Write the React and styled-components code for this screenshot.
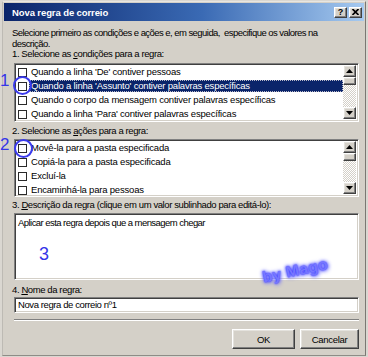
import React from "react";
import styled, { createGlobalStyle, css } from "styled-components";

const GlobalStyle = createGlobalStyle`
  body {
    margin: 0;
    background: #dad7d1;
  }
  * {
    box-sizing: border-box;
  }
`;

const raised = css`
  border: 1px solid;
  border-color: #ffffff #404040 #404040 #ffffff;
  box-shadow: inset -1px -1px #808080, inset 1px 1px #e4e2dd;
  background: #d4d0c8;
`;

const sunken = css`
  border: 1px solid;
  border-color: #808080 #ffffff #ffffff #808080;
  box-shadow: inset 1px 1px #404040, inset -1px -1px #d4d0c8;
  background: #ffffff;
`;

const Page = styled.div`
  position: relative;
  width: 368px;
  height: 357px;
  padding: 1px 2px 0 2px;
  overflow: hidden;
  font-family: "Liberation Sans", Arial, sans-serif;
  font-size: 9.5px;
  letter-spacing: -0.4px;
  color: #000;
`;

const Window = styled.div`
  height: 355px;
  background: #d4d0c8;
  border: 1px solid;
  border-color: #e8e6e1 #7a7873 #8e8c87 #bdbab4;
  display: flex;
  flex-direction: column;
`;

const TitleBar = styled.div`
  height: 18px;
  margin: 1px;
  padding: 0 2px 0 8px;
  display: flex;
  align-items: center;
  background: linear-gradient(to right, #0a246a 0%, #3a6ab4 55%, #a6caf0 100%);
`;

const Title = styled.span`
  flex: 1;
  color: #fff;
  font-weight: bold;
  font-size: 9.5px;
  letter-spacing: -0.1px;
`;

const CaptionButton = styled.div`
  ${raised};
  width: 13px;
  height: 11px;
  margin-left: 2px;
  display: flex;
  align-items: center;
  justify-content: center;
  font-weight: bold;
  font-size: 9px;
  letter-spacing: 0;
  line-height: 1;
`;

const Body = styled.div`
  position: relative;
  flex: 1;
  padding: 5px 6px 0 9px;
  display: flex;
  flex-direction: column;
`;

const Intro = styled.div`
  line-height: 11px;
  white-space: nowrap;
  letter-spacing: -0.55px;
`;

const Label = styled.div`
  line-height: 10px;
  margin-top: ${(p) => p.$top || 0}px;
`;

const Underline = styled.span`
  text-decoration: underline;
`;

const ListBox = styled.div`
  ${sunken};
  margin: ${(p) => p.$top || 4}px 0 0 2px;
  height: ${(p) => p.$height}px;
  padding: 1px 2px 2px 2px;
  display: flex;
`;

const Rows = styled.div`
  flex: 1;
`;

const Row = styled.div`
  height: 14px;
  display: flex;
  align-items: center;
  padding-left: 1px;
`;

const CheckBox = styled.span`
  width: 9px;
  height: 9px;
  border: 1px solid #2a2a2a;
  background: #fff;
  flex-shrink: 0;
`;

const RowText = styled.span`
  margin-left: 2px;
  padding: 0 2px;
  line-height: 12px;
  white-space: nowrap;
  letter-spacing: -0.2px;
  ${(p) =>
    p.$selected &&
    css`
      flex: 1;
      background: #0a246a;
      color: #fff;
      outline: 1px dotted #b8b8c8;
      outline-offset: -1px;
    `}
`;

const ScrollBar = styled.div`
  width: 13px;
  display: flex;
  flex-direction: column;
  background-color: #eeede9;
  background-image: repeating-conic-gradient(#d4d0c8 0 25%, #ffffff 0 50%);
  background-size: 2px 2px;
`;

const ScrollButton = styled.div`
  ${raised};
  height: 12px;
  display: flex;
  align-items: center;
  justify-content: center;
`;

const Thumb = styled.div`
  ${raised};
  height: 8px;
`;

const Track = styled.div`
  flex: 1;
`;

const DescBox = styled.div`
  ${sunken};
  position: relative;
  margin: 3px 0 0 2px;
  height: 67px;
  padding: 3px 3px;
  line-height: 11px;
  letter-spacing: -0.55px;
`;

const NameInput = styled.div`
  ${sunken};
  margin: 2px 0 0 2px;
  height: 16px;
  padding: 0 3px;
  line-height: 14px;
`;

const Separator = styled.div`
  margin: 6px 0 0 2px;
  height: 2px;
  border-top: 1px solid #808080;
  border-bottom: 1px solid #ffffff;
`;

const ButtonRow = styled.div`
  display: flex;
  justify-content: flex-end;
  gap: 5px;
  margin-top: 8px;
`;

const PushButton = styled.div`
  ${raised};
  width: ${(p) => p.$width}px;
  height: 20px;
  display: flex;
  align-items: center;
  justify-content: center;
  letter-spacing: -0.3px;
`;

/* hand drawn annotations lying over the dialog */
const Marker = styled.span`
  position: absolute;
  left: ${(p) => p.$x}px;
  top: ${(p) => p.$y}px;
  color: #3535e8;
  font-family: "Liberation Sans", Arial, sans-serif;
  font-size: ${(p) => p.$size || 17}px;
  letter-spacing: 0;
  line-height: 1;
`;

const Ring = styled.span`
  position: absolute;
  left: ${(p) => p.$x}px;
  top: ${(p) => p.$y}px;
  width: 19px;
  height: 19px;
  border: 2px solid #3a3aec;
  border-radius: 50%;
`;

const Signature = styled.span`
  position: absolute;
  right: 30px;
  bottom: 3px;
  color: #7676ff;
  font-family: "Liberation Sans", Arial, sans-serif;
  font-weight: bold;
  font-size: 16px;
  letter-spacing: 0.2px;
  transform: rotate(-12deg);
  text-shadow: 0 0 2px #2a2aff, 0 0 4px #5a5aff, 1px 1px 4px #8080ff;
`;

const Arrow = ({ down }) => (
  <svg width="7" height="4" viewBox="0 0 7 4">
    <polygon points={down ? "0,0 7,0 3.5,4" : "0,4 7,4 3.5,0"} fill="#000" />
  </svg>
);

const Scroll = () => (
  <ScrollBar>
    <ScrollButton>
      <Arrow />
    </ScrollButton>
    <Thumb />
    <Track />
    <ScrollButton>
      <Arrow down />
    </ScrollButton>
  </ScrollBar>
);

const conditions = [
  "Quando a linha 'De' contiver pessoas",
  "Quando a linha 'Assunto' contiver palavras específicas",
  "Quando o corpo da mensagem contiver palavras específicas",
  "Quando a linha 'Para' contiver palavras específicas",
];

const actions = [
  "Movê-la para a pasta especificada",
  "Copiá-la para a pasta especificada",
  "Excluí-la",
  "Encaminhá-la para pessoas",
];

const App = () => {
  return (
    <React.Fragment>
      <GlobalStyle />
      <Page>
        <Window>
          <TitleBar>
            <Title>Nova regra de correio</Title>
            <CaptionButton>?</CaptionButton>
            <CaptionButton>
              <svg width="7" height="6" viewBox="0 0 7 6">
                <path d="M0.5 0 L6.5 6 M6.5 0 L0.5 6" stroke="#000" strokeWidth="1.6" />
              </svg>
            </CaptionButton>
          </TitleBar>
          <Body>
            <Intro>
              Selecione primeiro as condições e ações e, em seguida,&nbsp; especifique os
              valores na
              <br />
              descrição.
            </Intro>
            <Label>
              1. Selecione as <Underline>c</Underline>ondições para a regra:
            </Label>
            <ListBox $top={4} $height={59}>
              <Rows>
                {conditions.map((c, i) => (
                  <Row key={c}>
                    <CheckBox />
                    <RowText $selected={i === 1}>{c}</RowText>
                  </Row>
                ))}
              </Rows>
              <Scroll />
            </ListBox>
            <Label $top={4}>
              2. Selecione as <Underline>a</Underline>ções para a regra:
            </Label>
            <ListBox $top={3} $height={58}>
              <Rows>
                {actions.map((a) => (
                  <Row key={a}>
                    <CheckBox />
                    <RowText>{a}</RowText>
                  </Row>
                ))}
              </Rows>
              <Scroll />
            </ListBox>
            <Label $top={3}>
              3. <Underline>D</Underline>escrição da regra (clique em um valor sublinhado
              para editá-lo):
            </Label>
            <DescBox>
              Aplicar esta regra depois que a mensagem chegar
              <Marker $x={24} $y={31} $size={18}>
                3
              </Marker>
              <Signature>by Mago</Signature>
            </DescBox>
            <Label $top={5}>
              4. <Underline>N</Underline>ome da regra:
            </Label>
            <NameInput>Nova regra de correio nº1</NameInput>
            <Separator />
            <ButtonRow>
              <PushButton $width={63}>OK</PushButton>
              <PushButton $width={59}>Cancelar</PushButton>
            </ButtonRow>
          </Body>
        </Window>
        <Marker $x={0} $y={72}>
          1
        </Marker>
        <Ring $x={13} $y={76} />
        <Marker $x={0} $y={136}>
          2
        </Marker>
        <Ring $x={14} $y={139} />
      </Page>
    </React.Fragment>
  );
};

export default App;
